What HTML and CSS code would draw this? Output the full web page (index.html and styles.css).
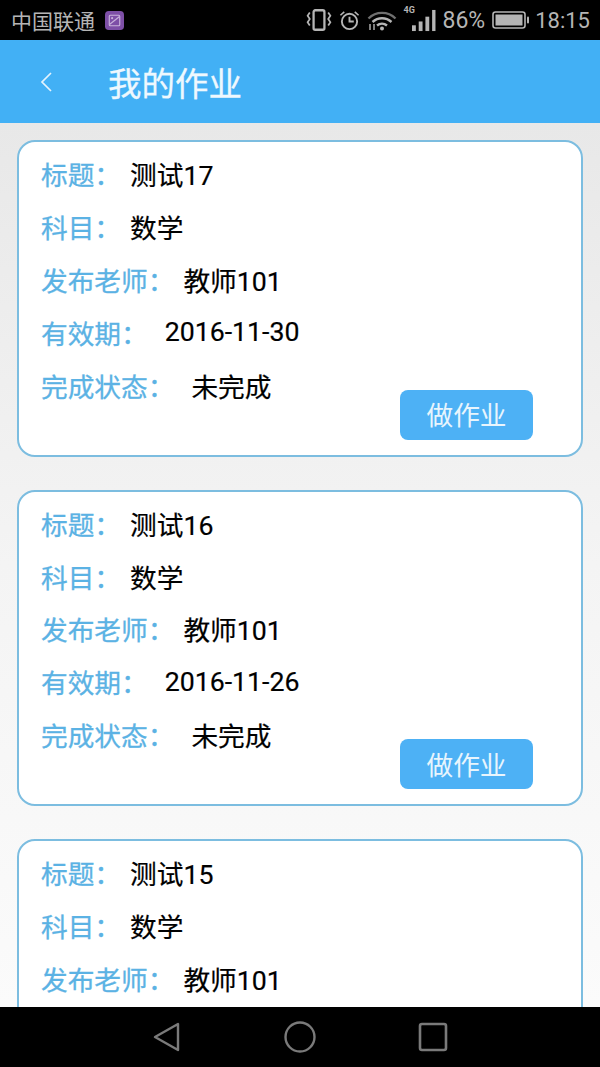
FILE: index.html

```html
<!DOCTYPE html>
<html lang="zh-CN">
<head>
  <meta charset="UTF-8">
  <meta name="viewport" content="width=device-width, initial-scale=1.0">
  <title>我的作业</title>
  <link rel="stylesheet" href="styles.css">
</head>
<body>
  <div class="phone">
    <div class="status-bar">
      <div class="status-left">
        <span class="carrier">中国联通</span>
        <svg class="gallery-icon" viewBox="0 0 20 20" width="19" height="19">
          <rect width="20" height="20" rx="4" fill="#7d4fa6"/>
          <rect x="4.5" y="4.5" width="11" height="11" rx="1" fill="none" stroke="#c9b3dc" stroke-width="1.2"/>
          <path d="M5 14 L15 6" stroke="#c9b3dc" stroke-width="1.2"/>
          <circle cx="7.5" cy="7.5" r="1.1" fill="#c9b3dc"/>
        </svg>
      </div>
      <div class="status-right">
        <!-- vibrate -->
        <svg viewBox="0 0 24 22" width="26" height="24" fill="none" stroke="#b5b5b5" stroke-width="2.1">
          <rect x="7" y="2" width="10" height="18" rx="1.5"/>
          <path d="M3.5 4 L1.5 7 L3.5 10 L1.5 13 L3.5 16 M20.5 4 L22.5 7 L20.5 10 L22.5 13 L20.5 16" stroke-width="1.6"/>
        </svg>
        <!-- alarm -->
        <svg viewBox="0 0 22 22" width="21" height="21" fill="none" stroke="#b5b5b5" stroke-width="2">
          <circle cx="11" cy="12" r="8"/>
          <path d="M11 7 V12 H15.5"/>
          <path d="M1.5 5.5 L5.5 2 M20.5 5.5 L16.5 2" stroke-width="1.7"/>
        </svg>
        <!-- wifi -->
        <svg class="wifi" viewBox="0 0 30 22" width="30" height="22" fill="none" stroke="#b5b5b5">
          <path d="M1.5 9.5 C9 2 21 2 28.5 9.5" stroke="#6f6f6f" stroke-width="2.4"/>
          <path d="M5.5 13 C11 8 19 8 24.5 13" stroke-width="2.4"/>
          <path d="M10 16.5 C13 14 17 14 20 16.5" stroke-width="2.4"/>
          <circle cx="15" cy="19.5" r="2" fill="#b5b5b5" stroke="none"/>
          <path d="M3 15 V21 M7 15 V21" stroke-width="1.4"/>
        </svg>
        <!-- 4G signal -->
        <div class="signal">
          <span class="net">4G</span>
          <svg viewBox="0 0 26 24" width="25" height="23" fill="#b5b5b5">
            <rect x="1" y="17" width="4" height="6"/>
            <rect x="8" y="13" width="4" height="10"/>
            <rect x="15" y="8" width="4" height="15"/>
            <rect x="22" y="1" width="3.5" height="22"/>
          </svg>
        </div>
        <span class="percent">86%</span>
        <!-- battery -->
        <svg viewBox="0 0 38 20" width="38" height="20">
          <rect x="1" y="2" width="32" height="16" rx="2.5" fill="none" stroke="#b5b5b5" stroke-width="1.6"/>
          <rect x="3.5" y="4.5" width="27" height="11" fill="#b5b5b5"/>
          <rect x="35" y="6.5" width="2" height="7" rx="1" fill="#b5b5b5"/>
        </svg>
        <span class="clock">18:15</span>
      </div>
    </div>

    <header class="top-bar">
      <svg class="back" viewBox="0 0 14 22" width="14" height="22" fill="none" stroke="#e4f3fd" stroke-width="1.7">
        <path d="M12 2 L3 11 L12 20"/>
      </svg>
      <h1>我的作业</h1>
    </header>

    <main class="list">
      <section class="card">
        <div class="row"><span class="label">标题：</span><span class="value">测试17</span></div>
        <div class="row"><span class="label">科目：</span><span class="value">数学</span></div>
        <div class="row"><span class="label">发布老师：</span><span class="value">教师101</span></div>
        <div class="row"><span class="label">有效期：</span><span class="value wide">2016-11-30</span></div>
        <div class="row"><span class="label">完成状态：</span><span class="value wide">未完成</span></div>
        <button class="do-btn">做作业</button>
      </section>

      <section class="card">
        <div class="row"><span class="label">标题：</span><span class="value">测试16</span></div>
        <div class="row"><span class="label">科目：</span><span class="value">数学</span></div>
        <div class="row"><span class="label">发布老师：</span><span class="value">教师101</span></div>
        <div class="row"><span class="label">有效期：</span><span class="value wide">2016-11-26</span></div>
        <div class="row"><span class="label">完成状态：</span><span class="value wide">未完成</span></div>
        <button class="do-btn">做作业</button>
      </section>

      <section class="card">
        <div class="row"><span class="label">标题：</span><span class="value">测试15</span></div>
        <div class="row"><span class="label">科目：</span><span class="value">数学</span></div>
        <div class="row"><span class="label">发布老师：</span><span class="value">教师101</span></div>
      </section>
    </main>

    <nav class="nav-bar">
      <svg viewBox="0 0 30 32" width="30" height="32" fill="none" stroke="#7a7a7a" stroke-width="2.4" stroke-linejoin="round">
        <path d="M26 3 V29 L3 16 Z"/>
      </svg>
      <svg viewBox="0 0 32 32" width="32" height="32" fill="none" stroke="#7a7a7a" stroke-width="2.4">
        <circle cx="16" cy="16" r="14.5"/>
      </svg>
      <svg viewBox="0 0 30 30" width="30" height="30" fill="none" stroke="#7a7a7a" stroke-width="2.6">
        <rect x="2" y="2" width="26" height="26" rx="2"/>
      </svg>
    </nav>
  </div>
</body>
</html>
```

FILE: styles.css

```css
* {
  box-sizing: border-box;
}

html, body {
  margin: 0;
  height: 100%;
}

body {
  font-family: Roboto, "Noto Sans CJK SC", sans-serif;
  overflow: hidden;
}

.phone {
  display: flex;
  flex-direction: column;
  height: 1067px;
}

/* status bar */
.status-bar {
  flex: 0 0 40px;
  display: flex;
  align-items: center;
  justify-content: space-between;
  background: #000;
  color: #b5b5b5;
  padding: 0 10px 0 11px;
}

.status-left {
  display: flex;
  align-items: center;
  gap: 10px;
}

.carrier {
  font-size: 21px;
}

.status-right {
  display: flex;
  align-items: center;
  gap: 7px;
  font-size: 22px;
}

.signal {
  position: relative;
  display: flex;
  padding-left: 7px;
}

.net {
  position: absolute;
  left: 0;
  top: -4px;
  font-size: 9px;
  font-weight: 700;
  line-height: 10px;
}

.percent {
  font-size: 23px;
}

.clock {
  margin-left: -2px;
}

/* header */
.top-bar {
  flex: 0 0 83px;
  display: flex;
  align-items: center;
  background: #42b0f5;
  padding-left: 39px;
  gap: 55px;
}

.top-bar h1 {
  margin: 0;
  font-size: 33.5px;
  font-weight: 400;
  color: #eef8fe;
  -webkit-text-stroke: 0.3px #eef8fe;
}

/* homework cards */
.list {
  flex: 1;
  min-height: 0;
  overflow: hidden;
  display: flex;
  flex-direction: column;
  gap: 33px;
  padding: 17px 17px 0;
  background: linear-gradient(#e8e8e8, #f4f4f4 50%, #fbfbfb);
}

.card {
  position: relative;
  flex: 0 0 316.5px;
  padding: 5.5px 22px 0;
  background: #fff;
  border: 2px solid #7cbde0;
  border-radius: 18px;
}

.row {
  display: flex;
  align-items: center;
  height: 52.8px;
  font-size: 26.7px;
}

.label {
  color: #5bb2e4;
  -webkit-text-stroke: 0.3px #5bb2e4;
}

.value {
  margin-left: 9px;
  color: #000;
  -webkit-text-stroke: 0.2px #000;
}

.value.wide {
  margin-left: 17px;
}

.do-btn {
  position: absolute;
  right: 48px;
  bottom: 15px;
  width: 133px;
  height: 50px;
  padding: 0 0 2px;
  border: 0;
  border-radius: 8px;
  background: #4db1f5;
  color: #e8f5fd;
  font-family: inherit;
  font-size: 26.7px;
}

/* system navigation */
.nav-bar {
  flex: 0 0 60px;
  display: flex;
  align-items: center;
  justify-content: space-between;
  background: #000;
  padding: 0 152px 0 152px;
}
```
